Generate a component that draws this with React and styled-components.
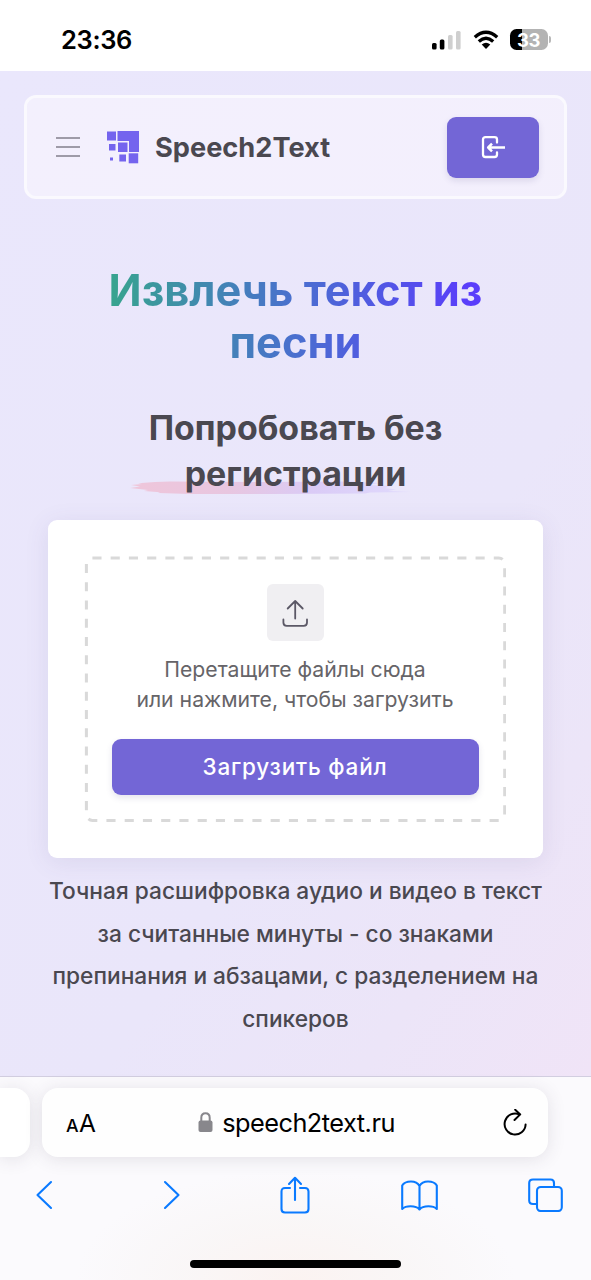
import React from "react";
import styled, { createGlobalStyle } from "styled-components";

const GlobalStyle = createGlobalStyle`
  *, *::before, *::after { box-sizing: border-box; }
  body { margin: 0; background: #fff; font-family: Inter, "Liberation Sans", sans-serif; }
  h1, h2, p { margin: 0; }
  svg { display: block; flex: none; }
  button { font: inherit; border: 0; padding: 0; background: none; }
`;

const Screen = styled.div`
  width: 591px;
  height: 1280px;
  overflow: hidden;
  display: flex;
  flex-direction: column;
`;

const StatusBar = styled.header`
  flex: none;
  height: 71px;
  padding: 8px 40px 0 61px;
  display: flex;
  align-items: center;
  justify-content: space-between;
  background: #fff;
  color: #000;
`;

const Clock = styled.span`
  font-size: 25.5px;
  font-weight: 600;
  letter-spacing: -0.35px;
`;

const StatusIcons = styled.div`
  display: flex;
  align-items: center;
  gap: 11px;
`;

const Battery = styled.div`
  display: flex;
  align-items: center;
  gap: 1px;
`;

const BatteryBody = styled.div`
  width: 38px;
  height: 21px;
  border-radius: 6.5px;
  display: flex;
  align-items: center;
  justify-content: center;
  background: linear-gradient(90deg, #000 0 12.5px, #b3b3b3 12.5px);
  color: #fff;
  font-size: 18.5px;
  font-weight: 700;
  letter-spacing: -0.4px;
`;

const BatteryTip = styled.i`
  width: 2.5px;
  height: 7px;
  border-radius: 0 3px 3px 0;
  background: #b8b8b8;
`;

const Page = styled.main`
  flex: none;
  height: 1005px;
  padding: 24px 24px 0;
  background: linear-gradient(125deg, #eae7fc 0%, #eae6fa 62%, #ece5f8 82%, #f0e4f7 100%);
`;

const Navbar = styled.nav`
  height: 104px;
  padding: 0 25px 0 29px;
  display: flex;
  align-items: center;
  border: 3px solid rgba(255, 255, 255, 0.75);
  border-radius: 12px;
  background: rgba(247, 245, 253, 0.65);
  background-clip: padding-box;
`;

const MenuButton = styled.button`
  width: 24px;
  height: 20px;
  display: flex;
  flex-direction: column;
  justify-content: space-between;
`;

const MenuLine = styled.i`
  width: 24px;
  height: 2px;
  background: #9e9ba8;
`;

const Brand = styled.div`
  margin-left: 27px;
  flex: 1;
  display: flex;
  align-items: center;
  gap: 16px;
  color: #4a4850;
  font-size: 27.2px;
  font-weight: 700;
`;

const LoginButton = styled.button`
  width: 92px;
  height: 61px;
  border-radius: 9px;
  display: flex;
  align-items: center;
  justify-content: center;
  background: #7366d6;
  box-shadow: 0 3px 6px rgba(80, 70, 130, 0.14);
`;

const Content = styled.section`
  padding: 66px 24px 0;
  display: flex;
  flex-direction: column;
  align-items: center;
  text-align: center;
`;

const Title = styled.h1`
  width: 380px;
  white-space: nowrap;
  font-size: 43.4px;
  line-height: 51.5px;
  font-weight: 700;
  color: transparent;
  background: linear-gradient(90deg, #37a58d 0%, #4a6fcf 50%, #5a3dfb 96%);
  background-clip: text;
  -webkit-background-clip: text;
`;

const Subtitle = styled.h2`
  position: relative;
  width: 330px;
  margin-top: 37px;
  color: #4a4850;
  font-size: 33.9px;
  line-height: 45.5px;
  font-weight: 700;
  white-space: nowrap;
`;

const Brush = styled.svg`
  position: absolute;
  left: -1px;
  top: 75px;
`;

const SubtitleText = styled.span`
  position: relative;
`;

const UploadCard = styled.div`
  width: 495px;
  height: 338px;
  margin-top: 24px;
  padding: 36px 36px;
  border-radius: 9px;
  background: #fff;
  box-shadow: 0 4px 24px rgba(80, 70, 130, 0.1);
`;

const DropZone = styled.div`
  position: relative;
  width: 422px;
  height: 266px;
  padding: 28px 28px 0;
  display: flex;
  flex-direction: column;
  align-items: center;
`;

const DashedOutline = styled.svg`
  position: absolute;
  inset: 0;
`;

const UploadTile = styled.div`
  width: 57px;
  height: 57px;
  border-radius: 6px;
  display: flex;
  align-items: center;
  justify-content: center;
  background: #f0eff2;
`;

const UploadHint = styled.p`
  margin-top: 13px;
  color: #666468;
  font-size: 21.2px;
  line-height: 30px;
  white-space: nowrap;
`;

const UploadButton = styled.button`
  width: 367px;
  height: 56px;
  margin-top: 25px;
  padding-bottom: 2px;
  flex: none;
  border-radius: 9px;
  background: #7366d6;
  color: #fff;
  font-size: 22.5px;
  font-weight: 500;
  letter-spacing: 0.8px;
  box-shadow: 0 3px 6px rgba(80, 70, 130, 0.14);
`;

const Description = styled.p`
  margin-top: 12px;
  color: #4a4850;
  font-size: 22.72px;
  font-weight: 500;
  line-height: 42.6px;
  white-space: nowrap;
`;

const Line = styled.span`
  display: block;
`;

const BrowserBar = styled.footer`
  flex: 1;
  border-top: 1px solid #d2cee0;
  display: flex;
  flex-direction: column;
  align-items: center;
  background:
    radial-gradient(ellipse 220px 110px at 50% 100%, #fbf3f1 0%, rgba(249, 246, 246, 0.8) 55%, rgba(250, 249, 251, 0) 100%),
    #fbfafd;
`;

const TabStrip = styled.div`
  align-self: stretch;
  padding-top: 11px;
  display: flex;
  gap: 12px;
`;

const PreviousTab = styled.div`
  width: 30px;
  height: 69px;
  border-radius: 0 16px 16px 0;
  background: #fff;
  box-shadow: 0 2px 18px rgba(60, 55, 80, 0.13);
`;

const AddressBar = styled.div`
  width: 506px;
  height: 69px;
  padding: 0 21px 0 24px;
  display: flex;
  align-items: center;
  justify-content: space-between;
  border-radius: 16px;
  background: #fefefe;
  box-shadow: 0 2px 18px rgba(60, 55, 80, 0.13);
  color: #000;
`;

const TextSize = styled.span`
  width: 30px;
  padding-top: 3px;
  font-size: 24.5px;
  line-height: 30px;
  letter-spacing: -0.5px;
  white-space: nowrap;
`;

const SmallLetter = styled.span`
  margin-right: 1px;
  font-size: 17.8px;
  font-weight: 500;
`;

const Address = styled.div`
  margin-right: 6px;
  display: flex;
  align-items: center;
  gap: 9px;
  font-size: 25.3px;
  line-height: 30px;
  letter-spacing: -0.5px;
`;

const Toolbar = styled.div`
  width: 100%;
  height: 76px;
  padding: 0 27px 0 25px;
  display: flex;
  align-items: center;
  justify-content: space-between;
`;

const ToolButton = styled.button`
  width: 38px;
  height: 38px;
  display: flex;
  align-items: center;
  justify-content: center;
  padding-left: ${(p) => p.$indent || 0}px;
`;

const HomeIndicator = styled.div`
  width: 211px;
  height: 8px;
  margin-top: 27px;
  border-radius: 4px;
  background: #000;
`;

const SignalIcon = () => (
  <svg width="31" height="20" viewBox="0 0 31 20">
    <rect x="1" y="13" width="4.600" height="6.500" rx="1.500" fill="#000" />
    <rect x="8.800" y="9.500" width="4.600" height="10" rx="1.500" fill="#000" />
    <rect x="17" y="5" width="4.600" height="14.500" rx="1.500" fill="#cfcfcf" />
    <rect x="25" y="1" width="4.600" height="18.500" rx="1.500" fill="#cfcfcf" />
  </svg>
);

const WifiIcon = () => (
  <svg width="26" height="20" viewBox="0 0 26 20" fill="none" stroke="#000" strokeWidth="3.400">
    <path d="M1.800 7.200 Q13 -2.500 24.200 7.200" />
    <path d="M5.800 11.500 Q13 5.200 20.200 11.500" />
    <path d="M8.700 14.500 Q13 11 17.300 14.500 L13 18.900Z" fill="#000" stroke="none" />
  </svg>
);

const LogoIcon = () => (
  <svg width="32" height="33" viewBox="0 0 32 33" fill="#7464ee">
    <rect x="0" y="0.500" width="9" height="9" />
    <path d="M10.500 0H32V21H22V10H10.500Z" />
    <rect x="2" y="13" width="6.500" height="6.500" />
    <rect x="11" y="11.500" width="9.500" height="9.500" />
    <rect x="3" y="26.500" width="3" height="3" />
    <rect x="12.300" y="23.500" width="6.700" height="7" />
    <rect x="21.700" y="22.300" width="9.500" height="10" />
  </svg>
);

const LoginIcon = () => (
  <svg width="24" height="24" viewBox="0 0 24 24" fill="none" stroke="#fff" strokeWidth="2.300" strokeLinecap="round" strokeLinejoin="round">
    <path d="M16 7.500V4.500Q16 2.200 13.500 2.200H4.500Q2 2.200 2 4.500V19.500Q2 22 4.500 22H13.500Q16 22 16 19.500V17.500" />
    <path d="M24 12.500H7.500M11 8.700 7.200 12.500 11 16.300" strokeLinecap="butt" strokeWidth="2.500" />
  </svg>
);

const UploadIcon = () => (
  <svg width="26" height="28" viewBox="0 0 26 28" fill="none" stroke="#5b5866" strokeWidth="1.800" strokeLinecap="round" strokeLinejoin="round">
    <path d="M13.200 19.500V2M5.700 9.500 13.200 2 20.700 9.500" />
    <path d="M1.400 20.500V23.500Q1.400 26.800 4.700 26.800H21.700Q25 26.800 25 23.500V20.500" />
  </svg>
);

const LockIcon = () => (
  <svg width="15" height="21" viewBox="0 0 15 21">
    <path d="M3.300 9V5.700Q3.300 1.200 7.500 1.200T11.700 5.700V9" fill="none" stroke="#88878c" strokeWidth="2" />
    <rect x="0.500" y="8.500" width="14" height="11.500" rx="2" fill="#88878c" />
  </svg>
);

const ReloadIcon = () => (
  <svg width="24" height="28" viewBox="0 0 24 28" fill="none" stroke="#000" strokeWidth="2" strokeLinecap="round" strokeLinejoin="round">
    <path d="M22.600 15.500A10.500 10.500 0 1 1 16.500 5.500" />
    <path d="M12.200 0.800 17.200 5.400 11.500 11" />
  </svg>
);

const ToolIcon = styled.svg`
  fill: none;
  stroke: #0a7aff;
  stroke-width: 2.1;
  stroke-linecap: round;
  stroke-linejoin: round;
`;

export default function App() {
  return (
    <>
      <GlobalStyle />
      <Screen>
        <StatusBar>
          <Clock>23:36</Clock>
          <StatusIcons>
            <SignalIcon />
            <WifiIcon />
            <Battery>
              <BatteryBody>33</BatteryBody>
              <BatteryTip />
            </Battery>
          </StatusIcons>
        </StatusBar>

        <Page>
          <Navbar>
            <MenuButton aria-label="Меню">
              <MenuLine />
              <MenuLine />
              <MenuLine />
            </MenuButton>
            <Brand>
              <LogoIcon />
              <span>Speech2Text</span>
            </Brand>
            <LoginButton aria-label="Войти">
              <LoginIcon />
            </LoginButton>
          </Navbar>

          <Content>
            <Title>
              <Line>Извлечь текст из</Line>
              <Line>песни</Line>
            </Title>

            <Subtitle>
              <Brush width="282" height="16" viewBox="0 0 282 16">
                <defs>
                  <linearGradient id="brush" x1="0" x2="1" y1="0" y2="0">
                    <stop offset="0" stopColor="#efc6da" />
                    <stop offset="0.35" stopColor="#e8c6e0" />
                    <stop offset="0.65" stopColor="#dacbf6" />
                    <stop offset="1" stopColor="#e0dafd" />
                  </linearGradient>
                </defs>
                <path
                  fill="url(#brush)"
                  d="M1 5 12 4 8 3.200 25 2 40 1.500 130 2 220 1.500 250 3 238 5 262 6 255 8 266 9.500 258 11 281 12 240 12.500 235 13.500 140 14 60 14 28 13 30 12.300 14 11 18 10 0 8 10 6.500Z"
                />
              </Brush>
              <SubtitleText>
                <Line>Попробовать без</Line>
                <Line>регистрации</Line>
              </SubtitleText>
            </Subtitle>

            <UploadCard>
              <DropZone>
                <DashedOutline width="422" height="266" viewBox="0 0 422 266">
                  <rect
                    x="2.400"
                    y="2"
                    width="418.300"
                    height="262.400"
                    rx="6"
                    fill="none"
                    stroke="#d9d9d9"
                    strokeWidth="3"
                    pathLength="1351.240"
                    strokeDasharray="9.130 9.130"
                  />
                </DashedOutline>
                <UploadTile>
                  <UploadIcon />
                </UploadTile>
                <UploadHint>
                  <Line>Перетащите файлы сюда</Line>
                  <Line>или нажмите, чтобы загрузить</Line>
                </UploadHint>
                <UploadButton>Загрузить файл</UploadButton>
              </DropZone>
            </UploadCard>

            <Description>
              <Line>Точная расшифровка аудио и видео в текст</Line>
              <Line>за считанные минуты - со знаками</Line>
              <Line>препинания и абзацами, с разделением на</Line>
              <Line>спикеров</Line>
            </Description>
          </Content>
        </Page>

        <BrowserBar>
          <TabStrip>
            <PreviousTab />
            <AddressBar>
              <TextSize>
                <SmallLetter>A</SmallLetter>A
              </TextSize>
              <Address>
                <LockIcon />
                <span>speech2text.ru</span>
              </Address>
              <ReloadIcon />
            </AddressBar>
          </TabStrip>
          <Toolbar>
            <ToolButton aria-label="Назад">
              <ToolIcon width="18" height="30" viewBox="0 0 18 30">
                <path d="M16 2 2.500 15 16 28" />
              </ToolIcon>
            </ToolButton>
            <ToolButton aria-label="Вперёд" $indent={6}>
              <ToolIcon width="18" height="30" viewBox="0 0 18 30">
                <path d="M2 2 15.500 15 2 28" />
              </ToolIcon>
            </ToolButton>
            <ToolButton aria-label="Поделиться">
              <ToolIcon width="30" height="38" viewBox="0 0 30 38">
                <path d="M10 12H5Q1.500 12 1.500 15.500V33Q1.500 36.500 5 36.500H25Q28.500 36.500 28.500 33V15.500Q28.500 12 25 12H20" />
                <path d="M15 24V2M9 8 15 1.800 21 8" />
              </ToolIcon>
            </ToolButton>
            <ToolButton aria-label="Закладки">
              <ToolIcon width="37" height="31" viewBox="0 0 37 31">
                <path d="M18.500 6Q16 1.500 10 1.500 3.500 1.500 1.200 5.500V29Q4 26.300 9.500 26.300 16 26.300 18.500 29.500 21 26.300 27.500 26.300 33 26.300 35.800 29V5.500Q33.500 1.500 27 1.500 21 1.500 18.500 6V29" />
              </ToolIcon>
            </ToolButton>
            <ToolButton aria-label="Вкладки">
              <ToolIcon width="35" height="34" viewBox="0 0 35 34">
                <path d="M9 26H5Q1.200 26 1.200 22.500V5Q1.200 1.500 5 1.500H22.500Q26 1.500 26 5V9" />
                <rect x="9" y="9" width="24.800" height="24" rx="3.800" />
              </ToolIcon>
            </ToolButton>
          </Toolbar>
          <HomeIndicator />
        </BrowserBar>
      </Screen>
    </>
  );
}
